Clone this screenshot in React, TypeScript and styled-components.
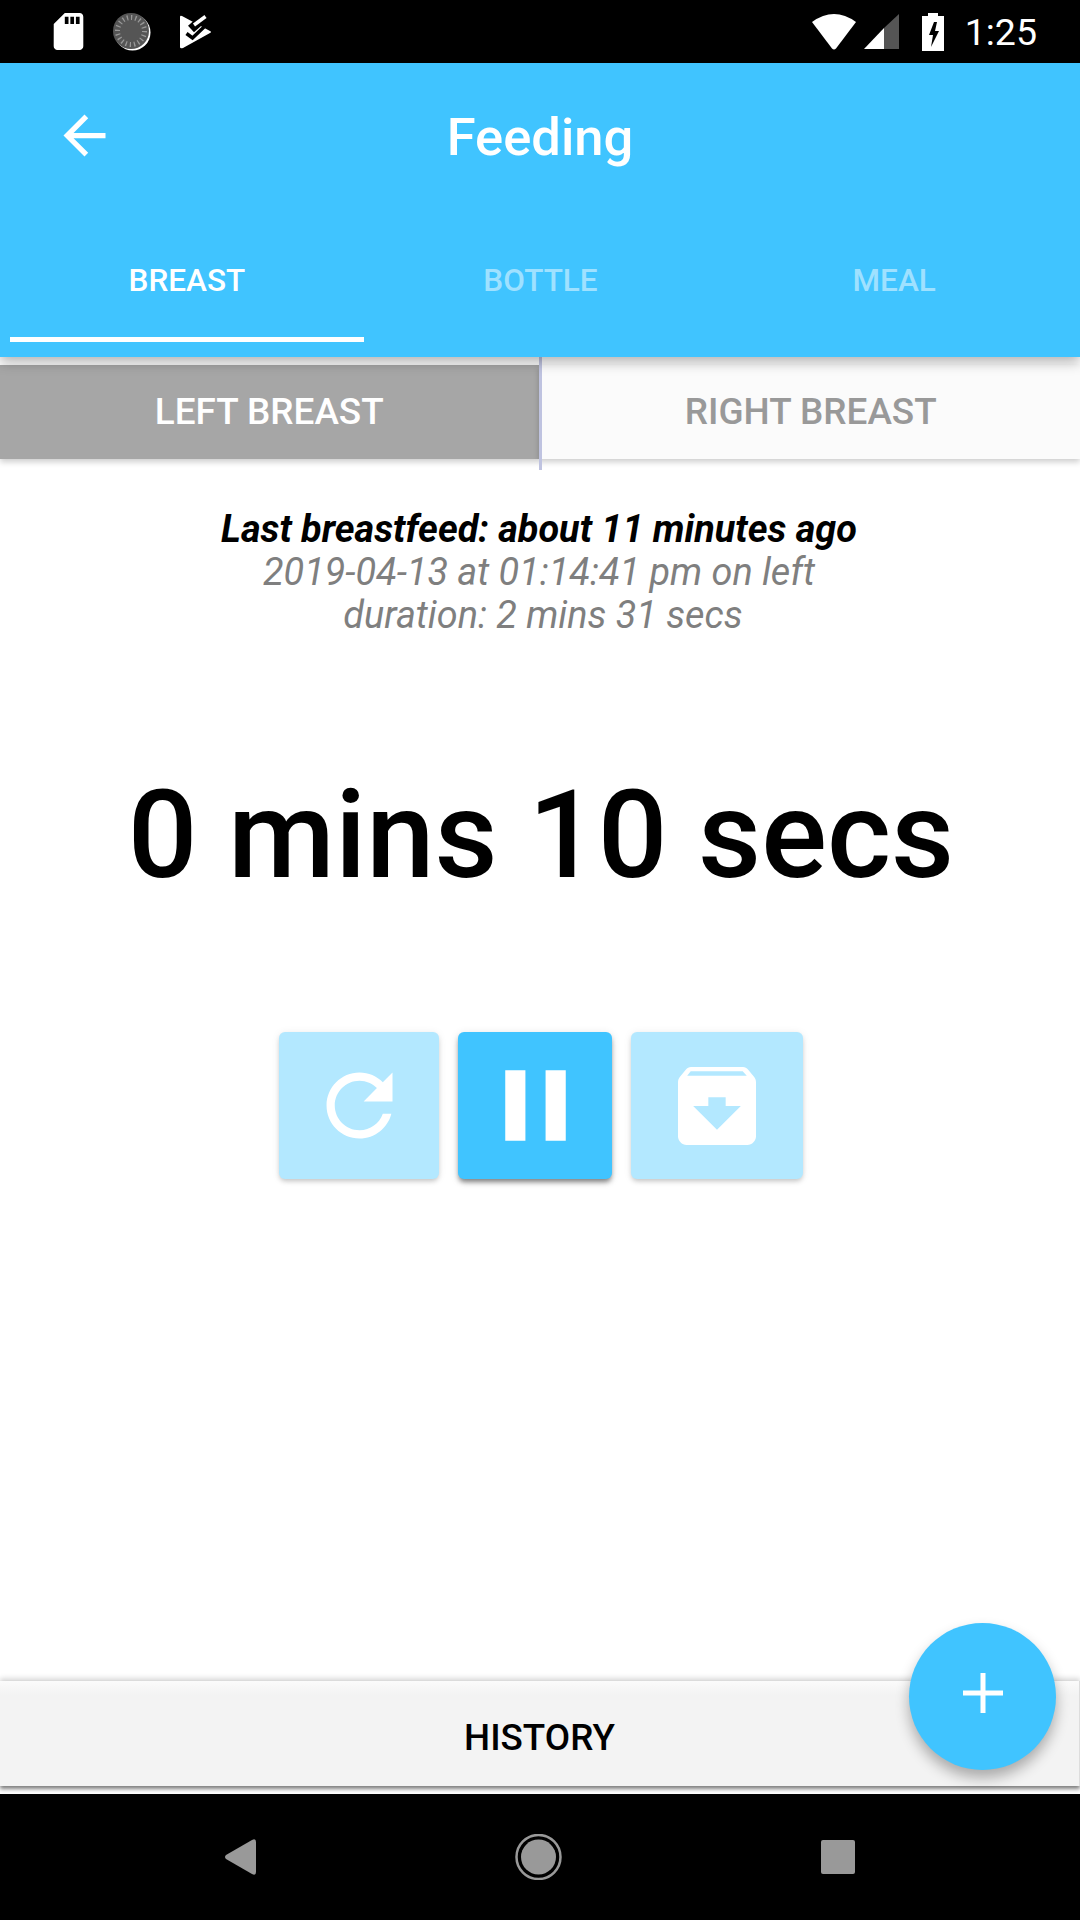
import React from 'react';
import styled, { createGlobalStyle } from 'styled-components';

const GlobalStyle = createGlobalStyle`
  html, body {
    margin: 0;
    padding: 0;
    background: #fff;
  }
  * {
    box-sizing: border-box;
  }
`;

const Screen = styled.div`
  width: 1080px;
  height: 1920px;
  position: relative;
  display: flex;
  flex-direction: column;
  overflow: hidden;
  background: #fff;
  font-family: Roboto, 'Noto Sans', sans-serif;
`;

const StatusBar = styled.div`
  height: 63px;
  flex: none;
  background: #000;
  display: flex;
  align-items: center;
  justify-content: space-between;
  padding: 0 43px 0 53px;
`;

const StatusGroup = styled.div<{ $gap: number }>`
  display: flex;
  align-items: center;
  gap: ${(p) => p.$gap}px;
`;

const Clock = styled.span`
  font-size: 37.5px;
  color: #fff;
  margin-left: 13px;
`;

const BatteryIcon = styled.svg`
  width: 22px;
  height: 38px;
  margin-left: 15px;
`;

const Header = styled.header`
  height: 294px;
  flex: none;
  background: #40c4ff;
  position: relative;
  z-index: 3;
  display: flex;
  flex-direction: column;
  box-shadow: 0 5px 12px rgba(0, 0, 0, 0.3);
`;

const TitleRow = styled.div`
  height: 148px;
  display: grid;
  grid-template-columns: 1fr auto 1fr;
  align-items: center;
  padding: 0 53px;
`;

const BackIcon = styled.svg`
  width: 63px;
  height: 63px;
  fill: #fff;
  margin-top: -3px;
`;

const Title = styled.h1`
  margin: 0;
  font-size: 52.5px;
  font-weight: 500;
  color: #fff;
`;

const Tabs = styled.nav`
  display: flex;
  padding: 3px 9px 0 10px;
`;

const Tab = styled.div<{ $active?: boolean }>`
  flex: 1;
  height: 128px;
  padding-top: 10px;
  display: flex;
  align-items: center;
  justify-content: center;
  font-size: 31.5px;
  font-weight: 480;
  color: ${(p) => (p.$active ? '#fff' : 'rgba(255, 255, 255, 0.5)')};
  border-bottom: 5px solid ${(p) => (p.$active ? '#fff' : 'transparent')};
`;

const Segments = styled.div`
  flex: none;
  position: relative;
  display: flex;
  height: 102px;
  padding-top: 8px;
`;

const Segment = styled.div<{ $active?: boolean }>`
  flex: 1;
  display: flex;
  align-items: center;
  justify-content: center;
  padding: 0 0 2px ${(p) => (p.$active ? 0 : 3)}px;
  font-size: 36.9px;
  font-weight: 480;
  color: ${(p) => (p.$active ? '#fff' : '#999')};
  background: ${(p) => (p.$active ? '#a6a6a6' : '#fbfbfb')};
  box-shadow: 0 3px 6px rgba(0, 0, 0, 0.2);
`;

const SegmentDivider = styled.div`
  position: absolute;
  left: 539px;
  top: 0;
  width: 3px;
  height: 113px;
  background: #bfc3e0;
`;

const Content = styled.main`
  flex: 1;
  display: flex;
  flex-direction: column;
  align-items: center;
  text-align: center;
`;

const LastFeed = styled.div`
  margin: 49px 0 0 -2px;
  font-size: 37.8px;
  line-height: 43px;
  font-style: italic;
  color: #7f7f7f;
`;

const LastFeedHeading = styled.div`
  font-weight: 700;
  color: #000;
`;

const LastFeedDuration = styled.div`
  padding-left: 8px;
`;

const Timer = styled.div`
  margin-top: 128px;
  padding-left: 2px;
  font-size: 122.7px;
  line-height: 140px;
  font-weight: 500;
  color: #000;
`;

const Controls = styled.div`
  margin-top: 127px;
  padding-left: 2px;
  display: flex;
  gap: 19px;
`;

const ControlButton = styled.button<{ $width: number; $active?: boolean }>`
  width: ${(p) => p.$width}px;
  height: 147px;
  border: 0;
  padding: 0;
  border-radius: 6px;
  display: flex;
  align-items: center;
  justify-content: center;
  background: ${(p) => (p.$active ? '#40c4ff' : '#b3e8ff')};
  box-shadow: ${(p) =>
    p.$active
      ? '0 4px 5px -1px rgba(0, 0, 0, 0.45), 0 2px 10px rgba(0, 0, 0, 0.12)'
      : '0 3px 5px -1px rgba(0, 0, 0, 0.2), 0 1px 8px rgba(0, 0, 0, 0.08)'};
`;

const ControlIcon = styled.svg<{ $size: number }>`
  width: ${(p) => p.$size}px;
  height: ${(p) => p.$size}px;
  fill: #fff;
`;

const HistoryBar = styled.div`
  height: 105px;
  flex: none;
  margin-bottom: 8px;
  padding-top: 7px;
  display: flex;
  align-items: center;
  justify-content: center;
  background: linear-gradient(#fbfbfb, #f3f3f3 14px);
  font-size: 36.8px;
  font-weight: 480;
  color: #000;
  border-right: 1px solid #ddd;
  box-shadow: 0 -3px 5px rgba(0, 0, 0, 0.14), 0 3px 4px rgba(0, 0, 0, 0.5);
`;

const Fab = styled.button`
  position: absolute;
  left: 909px;
  top: 1623px;
  width: 147px;
  height: 147px;
  padding: 0 0 7px;
  border: 0;
  border-radius: 50%;
  background: #40c4ff;
  display: flex;
  align-items: center;
  justify-content: center;
  box-shadow: 0 8px 14px rgba(0, 0, 0, 0.3);
`;

const NavBar = styled.div`
  height: 126px;
  flex: none;
  background: #000;
  position: relative;
  z-index: 1;
  display: flex;
  align-items: center;
  justify-content: space-between;
  padding: 0 225px 0 225px;
`;

const FEEDING_TABS = ['BREAST', 'BOTTLE', 'MEAL'];

const App = () => {
  return (
    <Screen>
      <GlobalStyle />
      <StatusBar>
        <StatusGroup $gap={29}>
          <svg width="31" height="37" viewBox="4 2 16 20" fill="#fff">
            <path d="M18 2h-8L4.02 8 4 20c0 1.1.9 2 2 2h12c1.1 0 2-.9 2-2V4c0-1.1-.9-2-2-2zm-6 6h-2V4h2v4zm3 0h-2V4h2v4zm3 0h-2V4h2v4z" />
          </svg>
          <svg width="38" height="38" viewBox="0 0 38 38">
            <circle cx="19.5" cy="19.5" r="18" fill="#fff" />
            <circle cx="18" cy="18" r="18" fill="#555" />
            <circle
              cx="18"
              cy="18"
              r="13.5"
              fill="none"
              stroke="#999"
              strokeWidth="5"
              pathLength={100}
              strokeDasharray="1.5 3.5"
            />
          </svg>
          <svg width="31" height="34" viewBox="0 0 31 34">
            <path
              d="M0 2 Q0 0 2 1 L30 16 Q32 17 30 18 L3 33 Q0 34 0 32 Z"
              fill="#fff"
            />
            <path d="M11 14 28 -1" fill="none" stroke="#000" strokeWidth="9" />
            <path d="M14 10 25.5 1.5" fill="none" stroke="#fff" strokeWidth="3.5" />
            <path d="M6.5 18.5l6 4.5L24 12" fill="none" stroke="#000" strokeWidth="3.5" />
          </svg>
        </StatusGroup>
        <StatusGroup $gap={8}>
          <svg width="44" height="36" viewBox="0 0 44 36" fill="#fff">
            <path d="M0 8 Q22 -8 44 8 L24 34.5 Q22 36.5 20 34.5 Z" />
          </svg>
          <svg width="35" height="35" viewBox="0 0 35 35">
            <path d="M35 0 V35 H20 V14 Z" fill="#555" />
            <path d="M20 14 V35 H0 Z" fill="#fff" />
          </svg>
          <BatteryIcon viewBox="0 0 22 38">
            <path d="M6 0h10v3h6v35H0V3h6z" fill="#fff" />
            <path d="M12 9 7 22h4L9 34 17 18h-4l2-9z" fill="#000" />
          </BatteryIcon>
          <Clock>1:25</Clock>
        </StatusGroup>
      </StatusBar>

      <Header>
        <TitleRow>
          <BackIcon viewBox="0 0 24 24">
            <path d="M20 11H7.83l5.59-5.59L12 4l-8 8 8 8 1.41-1.41L7.83 13H20v-2z" />
          </BackIcon>
          <Title>Feeding</Title>
        </TitleRow>
        <Tabs>
          {FEEDING_TABS.map((tab, i) => (
            <Tab key={tab} $active={i === 0}>
              {tab}
            </Tab>
          ))}
        </Tabs>
      </Header>

      <Segments>
        <Segment $active>LEFT BREAST</Segment>
        <Segment>RIGHT BREAST</Segment>
        <SegmentDivider />
      </Segments>

      <Content>
        <LastFeed>
          <LastFeedHeading>Last breastfeed: about 11 minutes ago</LastFeedHeading>
          <div>2019-04-13 at 01:14:41 pm on left</div>
          <LastFeedDuration>duration: 2 mins 31 secs</LastFeedDuration>
        </LastFeed>
        <Timer>0 mins 10 secs</Timer>
        <Controls>
          <ControlButton $width={160}>
            <ControlIcon $size={99} viewBox="0 0 24 24">
              <path d="M17.65 6.35C16.2 4.9 14.21 4 12 4c-4.42 0-7.99 3.58-7.99 8s3.57 8 7.99 8c3.73 0 6.84-2.55 7.73-6h-2.08c-.82 2.33-3.04 4-5.65 4-3.31 0-6-2.69-6-6s2.69-6 6-6c1.66 0 3.14.69 4.22 1.78L13 11h7V4l-2.35 2.35z" />
            </ControlIcon>
          </ControlButton>
          <ControlButton $width={154} $active>
            <ControlIcon $size={121} viewBox="0 0 24 24">
              <path d="M6 19h4V5H6v14zm8-14v14h4V5h-4z" />
            </ControlIcon>
          </ControlButton>
          <ControlButton $width={172}>
            <ControlIcon $size={104} viewBox="0 0 24 24">
              <path d="M20.54 5.23l-1.39-1.68C18.88 3.21 18.47 3 18 3H6c-.47 0-.88.21-1.16.55L3.46 5.23C3.17 5.57 3 6.02 3 6.5V19c0 1.1.9 2 2 2h14c1.1 0 2-.9 2-2V6.5c0-.48-.17-.93-.46-1.27zM12 17.5L6.5 12H10v-2h4v2h3.5L12 17.5zM5.12 5l.81-1h12l.94 1H5.12z" />
            </ControlIcon>
          </ControlButton>
        </Controls>
      </Content>

      <HistoryBar>HISTORY</HistoryBar>

      <NavBar>
        <svg width="31" height="36" viewBox="0 0 31 36" fill="#999">
          <path d="M1 16 27 1 Q31 -1 31 3 V33 Q31 37 27 35 L1 20 Q-1 18 1 16 Z" />
        </svg>
        <svg width="47" height="46" viewBox="0 0 47 46">
          <circle cx="23.5" cy="23" r="22" fill="none" stroke="#999" strokeWidth="2.5" />
          <circle cx="23.5" cy="23" r="17.5" fill="#999" />
        </svg>
        <svg width="34" height="34" viewBox="0 0 34 34" fill="#999">
          <rect width="34" height="34" rx="2" />
        </svg>
      </NavBar>

      <Fab>
        <svg width="40" height="40" viewBox="0 0 40 40" fill="#fff">
          <path d="M17.5 0h5v17.5H40v5H22.5V40h-5V22.5H0v-5h17.5z" />
        </svg>
      </Fab>
    </Screen>
  );
};

export default App;
